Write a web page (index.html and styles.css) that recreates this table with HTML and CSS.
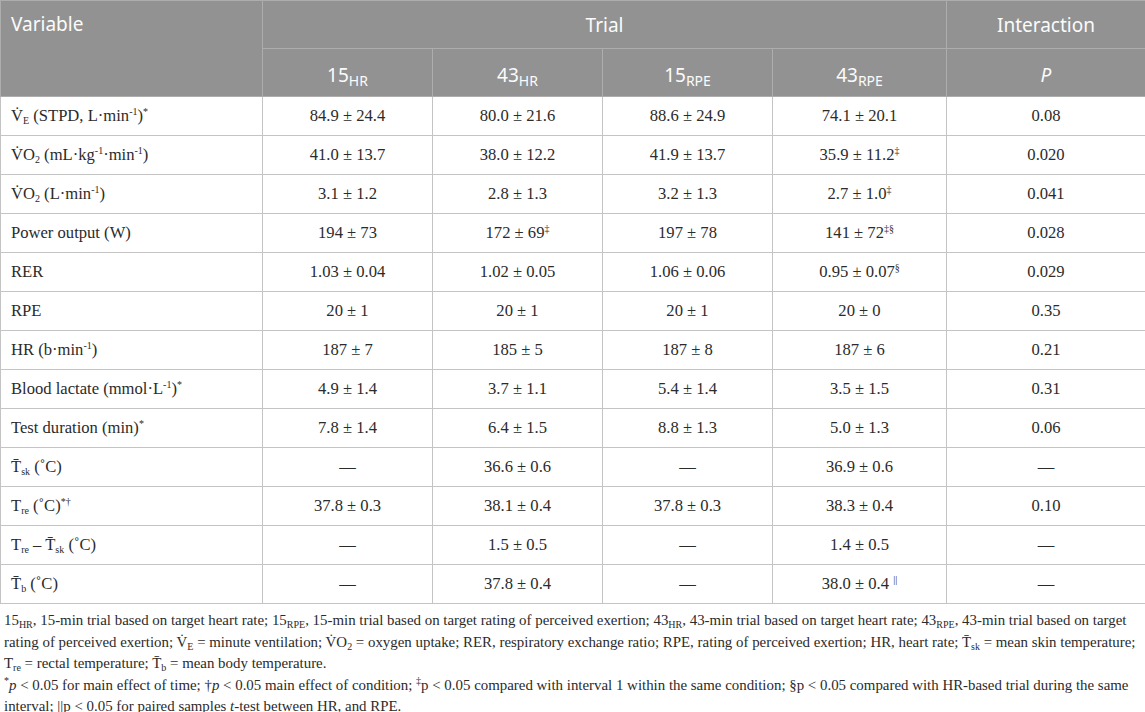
FILE: index.html
```html
<!DOCTYPE html>
<html lang="en">
<head>
  <meta charset="UTF-8" />
  <title>Table</title>
  <link rel="stylesheet" href="styles.css">
</head>
<body>

<table class="dados">
  <colgroup>
    <col class="c-var">
    <col class="c-val">
    <col class="c-val">
    <col class="c-val">
    <col class="c-val2">
    <col class="c-p">
  </colgroup>
  <thead>
    <tr class="h1">
      <th rowspan="2" class="esq">Variable</th>
      <th colspan="4">Trial</th>
      <th>Interaction</th>
    </tr>
    <tr class="h2">
      <th>15<sub>HR</sub></th>
      <th>43<sub>HR</sub></th>
      <th>15<sub>RPE</sub></th>
      <th>43<sub>RPE</sub></th>
      <th><i>P</i></th>
    </tr>
  </thead>
  <tbody>
    <tr>
      <td>V̇<sub>E</sub> (STPD, L·min<sup>-1</sup>)<sup>*</sup></td>
      <td>84.9 ± 24.4</td><td>80.0 ± 21.6</td><td>88.6 ± 24.9</td><td>74.1 ± 20.1</td><td>0.08</td>
    </tr>
    <tr>
      <td>V̇O<sub>2</sub> (mL·kg<sup>-1</sup>·min<sup>-1</sup>)</td>
      <td>41.0 ± 13.7</td><td>38.0 ± 12.2</td><td>41.9 ± 13.7</td><td>35.9 ± 11.2<sup>‡</sup></td><td>0.020</td>
    </tr>
    <tr>
      <td>V̇O<sub>2</sub> (L·min<sup>-1</sup>)</td>
      <td>3.1 ± 1.2</td><td>2.8 ± 1.3</td><td>3.2 ± 1.3</td><td>2.7 ± 1.0<sup>‡</sup></td><td>0.041</td>
    </tr>
    <tr>
      <td>Power output (W)</td>
      <td>194 ± 73</td><td>172 ± 69<sup>‡</sup></td><td>197 ± 78</td><td>141 ± 72<sup>‡§</sup></td><td>0.028</td>
    </tr>
    <tr>
      <td>RER</td>
      <td>1.03 ± 0.04</td><td>1.02 ± 0.05</td><td>1.06 ± 0.06</td><td>0.95 ± 0.07<sup>§</sup></td><td>0.029</td>
    </tr>
    <tr>
      <td>RPE</td>
      <td>20 ± 1</td><td>20 ± 1</td><td>20 ± 1</td><td>20 ± 0</td><td>0.35</td>
    </tr>
    <tr>
      <td>HR (b·min<sup>-1</sup>)</td>
      <td>187 ± 7</td><td>185 ± 5</td><td>187 ± 8</td><td>187 ± 6</td><td>0.21</td>
    </tr>
    <tr>
      <td>Blood lactate (mmol·L<sup>-1</sup>)<sup>*</sup></td>
      <td>4.9 ± 1.4</td><td>3.7 ± 1.1</td><td>5.4 ± 1.4</td><td>3.5 ± 1.5</td><td>0.31</td>
    </tr>
    <tr>
      <td>Test duration (min)<sup>*</sup></td>
      <td>7.8 ± 1.4</td><td>6.4 ± 1.5</td><td>8.8 ± 1.3</td><td>5.0 ± 1.3</td><td>0.06</td>
    </tr>
    <tr>
      <td>T̄<sub>sk</sub> (˚C)</td>
      <td>—</td><td>36.6 ± 0.6</td><td>—</td><td>36.9 ± 0.6</td><td>—</td>
    </tr>
    <tr>
      <td>T<sub>re</sub> (˚C)<sup>*†</sup></td>
      <td>37.8 ± 0.3</td><td>38.1 ± 0.4</td><td>37.8 ± 0.3</td><td>38.3 ± 0.4</td><td>0.10</td>
    </tr>
    <tr>
      <td>T<sub>re</sub> – T̄<sub>sk</sub> (˚C)</td>
      <td>—</td><td>1.5 ± 0.5</td><td>—</td><td>1.4 ± 0.5</td><td>—</td>
    </tr>
    <tr>
      <td>T̄<sub>b</sub> (˚C)</td>
      <td>—</td><td>37.8 ± 0.4</td><td>—</td><td>38.0 ± 0.4 <sup>||</sup></td><td>—</td>
    </tr>
  </tbody>
</table>

<div class="notas">
  <p>15<sub>HR</sub>, 15-min trial based on target heart rate; 15<sub>RPE</sub>, 15-min trial based on target rating of perceived exertion; 43<sub>HR</sub>, 43-min trial based on target heart rate; 43<sub>RPE</sub>, 43-min trial based on target<br>rating of perceived exertion; V̇<sub>E</sub> = minute ventilation; V̇O<sub>2</sub> = oxygen uptake; RER, respiratory exchange ratio; RPE, rating of perceived exertion; HR, heart rate; T̄<sub>sk</sub> = mean skin temperature;<br>T<sub>re</sub> = rectal temperature; T̄<sub>b</sub> = mean body temperature.</p>
  <p><sup>*</sup><i>p</i> &lt; 0.05 for main effect of time; †<i>p</i> &lt; 0.05 main effect of condition; <sup>‡</sup>p &lt; 0.05 compared with interval 1 within the same condition; §p &lt; 0.05 compared with HR-based trial during the same<br>interval; ||p &lt; 0.05 for paired samples <i>t</i>-test between HR, and RPE.</p>
</div>

</body>
</html>
```

FILE: styles.css
```css
* {
  box-sizing: border-box;
}

html, body {
  margin: 0;
  padding: 0;
  background: #fff;
  color: #2b2b2b;
  font-family: 'Liberation Serif', 'Times New Roman', serif;
}

.dados {
  width: 1145px;
  border-collapse: collapse;
  table-layout: fixed;
  font-size: 16.6px;
}

.c-var { width: 262px; }
.c-val { width: 170px; }
.c-val2 { width: 174px; }
.c-p { width: 199px; }

thead th {
  background: #929292;
  color: #fbfbfb;
  font-family: 'Noto Sans', 'Open Sans', sans-serif;
  font-weight: normal;
  font-size: 19px;
  border: 1px solid #adadad;
  text-align: center;
  padding: 0 10px;
}

thead .h1 th {
  height: 48px;
}

thead .h2 th {
  height: 48px;
  padding-top: 4px;
}

thead th.esq {
  text-align: left;
  vertical-align: top;
  padding-top: 10px;
}

thead sub {
  font-size: 14px;
  vertical-align: -4px;
  line-height: 0;
}

tbody td {
  height: 39px;
  border: 1px solid #c4c4c4;
  text-align: center;
  padding: 0 10px;
  line-height: 1;
}

tbody td:first-child {
  text-align: left;
}

sub, sup {
  font-size: 10px;
  line-height: 0;
}

sup {
  vertical-align: 6px;
}

sub {
  vertical-align: -3px;
}

.notas {
  padding: 6px 0 0 4px;
  font-size: 14.9px;
  line-height: 21.5px;
}

.notas p {
  margin: 0;
}
```
